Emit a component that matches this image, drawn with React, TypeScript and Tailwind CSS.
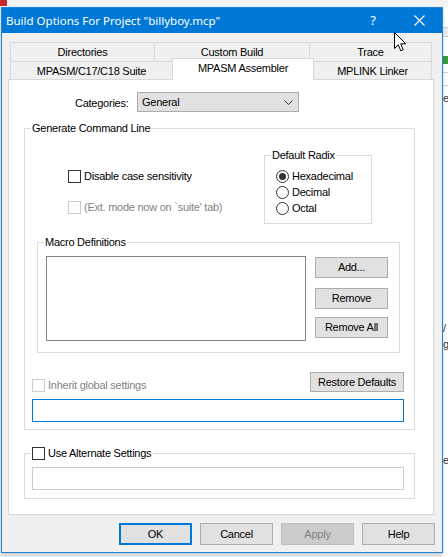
import type { ReactNode } from 'react';

const SANS = "font-['Liberation_Sans',Arial,sans-serif] text-[11px] tracking-[-0.25px]";

const Check = ({ disabled }: { disabled?: boolean }) => (
  <span
    className={
      disabled
        ? 'block w-[13px] h-[13px] shrink-0 border border-[#cccccc] bg-white'
        : 'block w-[13px] h-[13px] shrink-0 border border-[#333333] bg-white'
    }
  />
);

const Radio = ({ label, checked }: { label: string; checked?: boolean }) => (
  <div className="flex h-[16px] items-center gap-[3px]">
    <span className="flex w-[13px] h-[13px] shrink-0 items-center justify-center rounded-full border border-[#333333] bg-white">
      {checked && <span className="block w-[7px] h-[7px] rounded-full bg-[#333333]" />}
    </span>
    <span className="leading-[13px]">{label}</span>
  </div>
);

const Btn = ({ children, className = '' }: { children: ReactNode; className?: string }) => (
  <button
    className={`flex items-center justify-center border border-[#adadad] bg-[#e1e1e1] leading-[13px] text-black ${className}`}
  >
    {children}
  </button>
);

const Group = ({ label, className, children }: { label: ReactNode; className: string; children?: ReactNode }) => (
  <div className={`relative border border-[#dcdcdc] ${className}`}>
    <div className="absolute left-[6px] top-[-7px] bg-white px-[1px] leading-[13px]">{label}</div>
    {children}
  </div>
);

const Tab = ({ children, className }: { children: ReactNode; className: string }) => (
  <div className={`flex items-center justify-center border-[#d9d9d9] bg-[#f0f0f0] leading-[13px] ${className}`}>
    {children}
  </div>
);

export default function App() {
  return (
    <div className={`relative w-[448px] h-[557px] overflow-hidden bg-[#efefef] ${SANS} text-black`}>
      {/* desktop behind the dialog */}
      <div className="absolute left-0 top-0 h-[7px] w-[448px] bg-[#f4f4f4]">
        <div className="h-[6px] w-[7px] bg-[#c8262c]" />
      </div>
      <div className="absolute right-0 top-[7px] h-[550px] w-[6px] bg-white text-[#333]">
        <div className="mt-[20px] h-[10px] w-[6px] border-y border-[#cfcfcf] bg-[#ececec]" />
        <div className="mt-[19px] h-[8px] w-[6px] bg-[#3b9a3b]" />
        <div className="mt-[8px] h-[14px] w-[6px] border-y border-[#cfcfcf]" />
        <div className="mt-[6px] pl-[1px] leading-[12px]">e</div>
        <div className="mt-[218px] pl-[1px] leading-[12px]">/</div>
        <div className="mt-[4px] pl-[1px] leading-[12px]">g</div>
        <div className="mt-[104px] pl-[1px] leading-[12px]">e</div>
      </div>

      {/* dialog window */}
      <div className="absolute left-[1px] top-[7px] flex h-[546px] w-[442px] flex-col border border-[#1a84d8] bg-[#f0f0f0] shadow-[0_2px_4px_rgba(0,0,0,0.15)]">
        <div className="flex h-[25px] shrink-0 items-center bg-[#0078d7] pl-[4px] text-white">
          <span className="font-['Noto_Sans',sans-serif] text-[11.5px] tracking-normal">
            Build Options For Project "billyboy.mcp"
          </span>
          <span className="ml-auto mr-[38px] font-['Noto_Sans',sans-serif] text-[13px] tracking-normal">?</span>
          <svg className="mr-[17px]" width="11" height="11" viewBox="0 0 11 11">
            <path d="M0.5 0.5 L10.5 10.5 M10.5 0.5 L0.5 10.5" stroke="white" strokeWidth="1.1" />
          </svg>
        </div>

        <div className="flex flex-col pl-[6px] pr-[8px] pt-[9px]">
          {/* tabs */}
          <div className="ml-[2px] flex h-[19px]">
            <Tab className="w-[144px] border-l border-t">Directories</Tab>
            <Tab className="w-[155px] border-l border-t">Custom Build</Tab>
            <Tab className="w-[123px] border-l border-r border-t">Trace</Tab>
          </div>
          <div className="ml-[2px] flex h-[18px]">
            <Tab className="w-[162px] border-l border-t pt-[1px]">MPASM/C17/C18 Suite</Tab>
            <Tab className="relative z-10 -mt-[3px] h-[22px] w-[142px] border-l border-r border-t !bg-white pb-[3px]">
              MPASM Assembler
            </Tab>
            <Tab className="w-[118px] border-r border-t pt-[1px]">MPLINK Linker</Tab>
          </div>

          {/* tab page */}
          <div className="flex h-[436px] w-[426px] flex-col border border-[#d9d9d9] bg-white">
            <div className="mt-[12px] flex">
              <span className="ml-[66px] w-[62px] pt-[5px] leading-[13px]">Categories:</span>
              <div className="flex h-[20px] w-[162px] items-center justify-between border border-[#acacac] bg-[#e1e1e1] pl-[4px] pr-[5px]">
                <span className="leading-[13px]">General</span>
                <svg width="9" height="5" viewBox="0 0 9 5">
                  <path d="M0.5 0.5 L4.5 4.5 L8.5 0.5" fill="none" stroke="#333" strokeWidth="1" />
                </svg>
              </div>
            </div>

            <Group label="Generate Command Line" className="ml-[15px] mt-[16px] w-[391px] pb-[7px]">
              <div className="mt-[26px] flex">
                <div className="w-[239px] pl-[43px] pt-[15px]">
                  <div className="flex h-[13px] items-center gap-[3px]">
                    <Check />
                    <span className="leading-[13px]">Disable case sensitivity</span>
                  </div>
                  <div className="mt-[18px] flex h-[13px] items-center gap-[3px]">
                    <Check disabled />
                    <span className="leading-[13px] text-[#838383]">(Ext. mode now on `suite' tab)</span>
                  </div>
                </div>
                <Group label="Default Radix" className="h-[69px] w-[108px] pl-[11px] pt-[12px]">
                  <Radio label="Hexadecimal" checked />
                  <Radio label="Decimal" />
                  <Radio label="Octal" />
                </Group>
              </div>

              <Group label="Macro Definitions" className="ml-[12px] mt-[18px] flex h-[111px] w-[363px]">
                <div className="ml-[8px] mt-[13px] h-[85px] w-[260px] border border-[#828282] bg-white" />
                <div className="ml-[9px] flex flex-col pt-[14px]">
                  <Btn className="h-[21px] w-[73px]">Add...</Btn>
                  <Btn className="mt-[10px] h-[21px] w-[73px]">Remove</Btn>
                  <Btn className="mt-[8px] h-[21px] w-[73px]">Remove All</Btn>
                </div>
              </Group>

              <div className="mt-[19px] flex h-[20px] items-start justify-between">
                <div className="ml-[7px] mt-[7px] flex items-center gap-[3px]">
                  <Check disabled />
                  <span className="leading-[13px] text-[#838383]">Inherit global settings</span>
                </div>
                <Btn className="mr-[10px] h-[20px] w-[94px]">Restore Defaults</Btn>
              </div>
              <div className="ml-[7px] mt-[7px] h-[23px] w-[372px] border border-[#0078d7] bg-white" />
            </Group>

            <Group
              label={
                <span className="flex items-center gap-[3px] pr-[1px]">
                  <Check />
                  <span className="leading-[13px]">Use Alternate Settings</span>
                </span>
              }
              className="ml-[15px] mt-[23px] w-[391px] pb-[8px]"
            >
              <div className="ml-[7px] mt-[13px] h-[23px] w-[372px] border border-[#cccccc] bg-white" />
            </Group>
          </div>

          {/* dialog buttons */}
          <div className="mr-[-1px] mt-[8px] flex justify-end gap-[8px]">
            <Btn className="h-[22px] w-[73px] border-2 !border-[#0078d7]">OK</Btn>
            <Btn className="h-[22px] w-[73px]">Cancel</Btn>
            <Btn className="h-[22px] w-[73px] !border-[#bfbfbf] !bg-[#cccccc] !text-[#838383]">Apply</Btn>
            <Btn className="h-[22px] w-[73px]">Help</Btn>
          </div>
        </div>
      </div>

      {/* mouse pointer over the title bar */}
      <svg className="absolute left-[394px] top-[32px]" width="13" height="20" viewBox="0 0 13 20">
        <path
          d="M0.5 0.5 L0.5 16.5 L4.3 12.8 L6.8 18.8 L9.2 17.8 L6.7 11.8 L11.8 11.8 Z"
          fill="white"
          stroke="black"
          strokeWidth="1"
          strokeLinejoin="round"
        />
      </svg>
    </div>
  );
}
